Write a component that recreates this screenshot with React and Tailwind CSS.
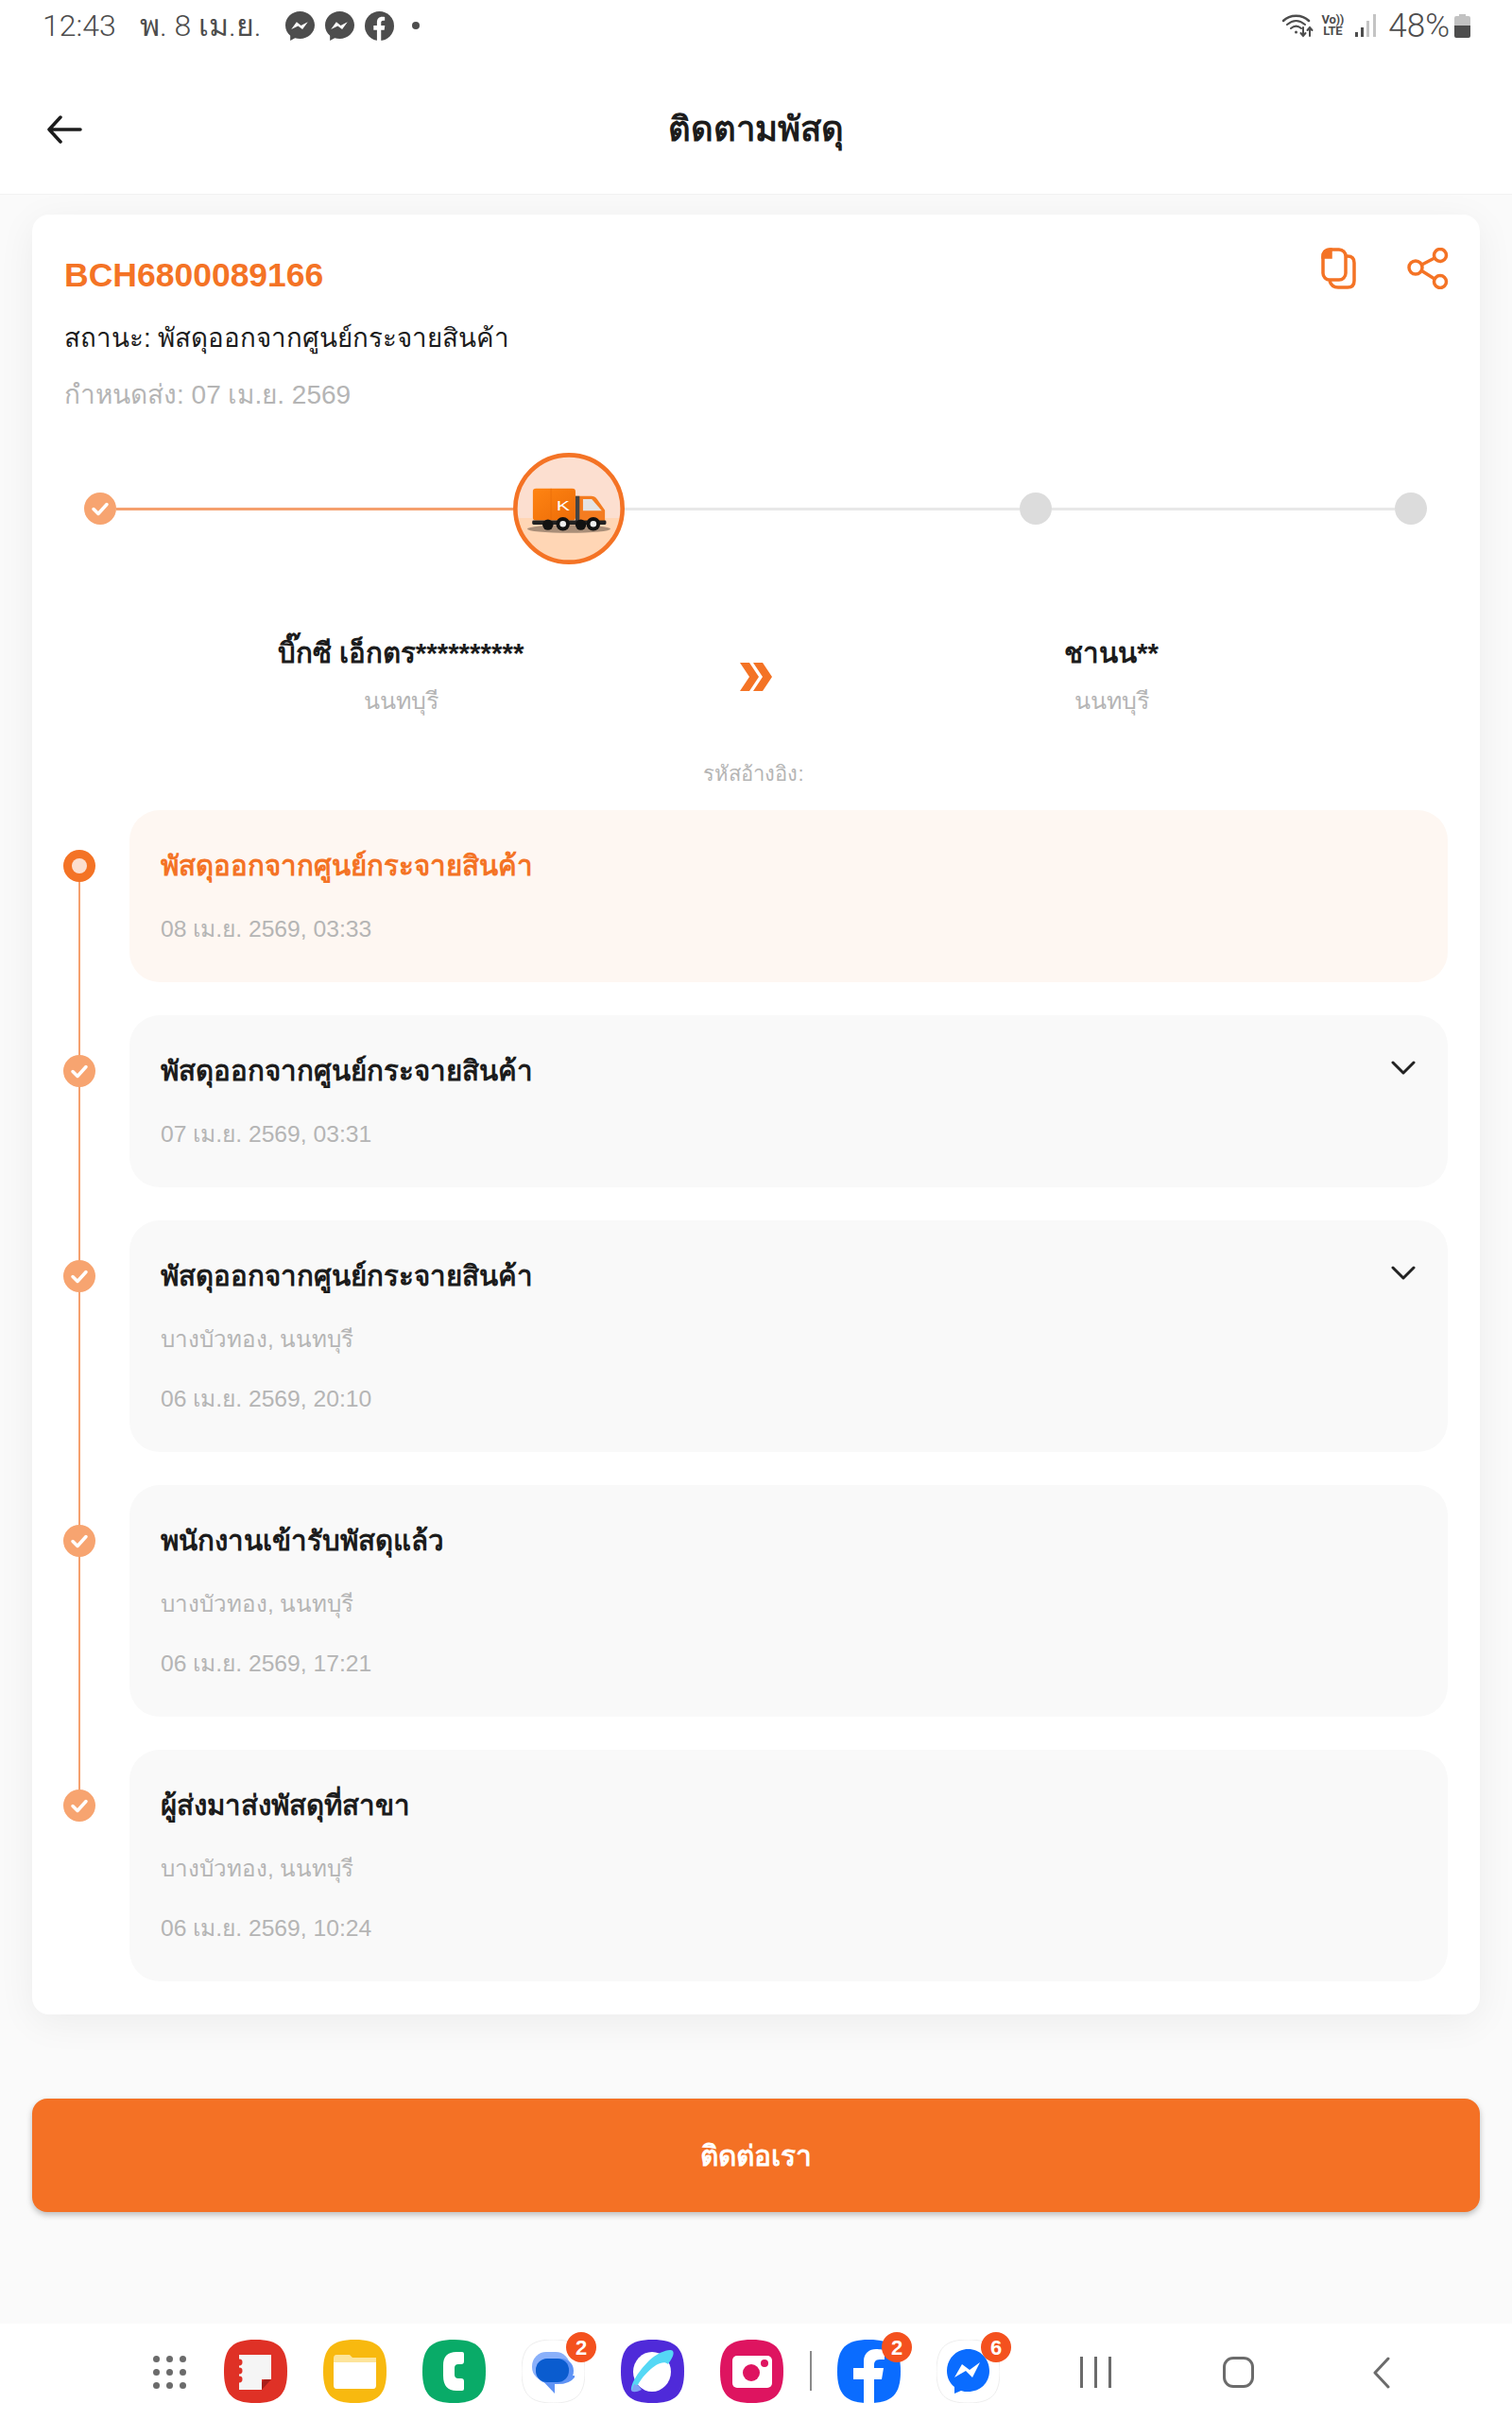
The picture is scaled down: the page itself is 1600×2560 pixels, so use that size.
const FONT = "font-['Liberation_Sans','Noto_Sans',sans-serif]";

const Messenger = ({ size = 31, color = "#4d4d4d" }) => (
  <svg width={size} height={size} viewBox="0 0 30 30">
    <path d="M15 0C6.700 0 0 6.200 0 14.300c0 4.300 1.900 8 5 10.600V30l4.800-2.700c1.600.5 3.400.8 5.200.8 8.300 0 15-6.200 15-14S23.300 0 15 0Z" fill={color} />
    <path d="M6 18.500 11.500 11l4.500 3.500L23 11l-5.500 7.500L13 15Z" fill="#fff" />
  </svg>
);

const StatusBar = () => (
  <div className="flex justify-between items-center h-[54px] pl-[45px] pr-[44px] text-[#4d4d4d] font-['Roboto','Liberation_Sans',sans-serif]">
    <div className="flex items-center">
      <span className="text-[32px] font-light w-[103px]">12:43</span>
      <span className="text-[32px] font-light w-[154px]">พ. 8 เม.ย.</span>
      <div className="flex items-center gap-[11px]">
        <Messenger />
        <Messenger />
        <svg width="31" height="31" viewBox="0 0 30 30">
          <circle cx="15" cy="15" r="15" fill="#4d4d4d" />
          <path d="M12.500 30V19H9v-4.500h3.500V11c0-3.500 2.200-5.500 5.300-5.500 1.500 0 2.700.2 2.700.2v3.800h-1.600c-1.700 0-2.200 1-2.200 2.100v2.900h3.900l-.6 4.500h-3.300v11Z" fill="#fff" />
        </svg>
        <div className="w-[8px] h-[8px] rounded-full bg-[#4d4d4d] ml-[8px]"></div>
      </div>
    </div>
    <div className="flex items-center">
      <svg width="34" height="26" viewBox="0 0 34 26" fill="none" stroke="#4d4d4d" strokeWidth="2" strokeLinecap="round">
        <path d="M1 8C8 1 21 1 28 8" strokeWidth="2.500" />
        <path d="M5 12C11 7 18 7 24 12" />
        <path d="M9 16C12.500 13 16.500 13 20 16" />
        <circle cx="14.500" cy="20" r="1.500" fill="#4d4d4d" stroke="none" />
        <path d="M22 15v8M19.500 21l2.500 3 2.500-3M29 24v-8M26.500 18l2.500-3 2.500 3" />
      </svg>
      <div className="flex flex-col items-center w-[26px] ml-[6px] text-[13px] leading-[12px] font-bold tracking-[-0.3px]">
        <span>Vo))</span>
        <span>LTE</span>
      </div>
      <svg className="ml-[11px]" width="22" height="24" viewBox="0 0 22 24">
        <rect x="0" y="19" width="3" height="5" fill="#4d4d4d" />
        <rect x="6" y="14" width="3" height="10" fill="#4d4d4d" />
        <rect x="12" y="7" width="3" height="17" fill="#c4c4c4" />
        <rect x="19" y="0" width="3" height="24" fill="#c4c4c4" />
      </svg>
      <span className="text-[35px] font-light ml-[13px] leading-none">48%</span>
      <svg className="ml-[5px]" width="17" height="25" viewBox="0 0 17 25">
        <path d="M5 0h7v2h3q2 0 2 2v8H0V4q0-2 2-2h3Z" fill="#c2c2c2" />
        <path d="M0 12h17v11q0 2-2 2H2q-2 0-2-2Z" fill="#4d4d4d" />
      </svg>
    </div>
  </div>
);

const Check = () => (
  <svg width="34" height="34" viewBox="0 0 34 34">
    <circle cx="17" cy="17" r="17" fill="#f7a470" />
    <path d="M10 17.500l5 5 9-10" fill="none" stroke="#fff" strokeWidth="3.500" strokeLinecap="round" strokeLinejoin="round" />
  </svg>
);

const Truck = () => (
  <svg className="shrink-0" width="118" height="118" viewBox="129 57 356 356">
    <defs>
      <clipPath id="disc">
        <circle cx="307" cy="235" r="171" />
      </clipPath>
      <linearGradient id="box" x1="0" y1="0" x2="1" y2="1">
        <stop offset="0" stopColor="#ff8412" />
        <stop offset="1" stopColor="#ec6c08" />
      </linearGradient>
    </defs>
    <g clipPath="url(#disc)">
      <rect x="129" y="57" width="356" height="208" fill="#fcdfd0" />
      <rect x="129" y="265" width="356" height="148" fill="#ffd6b5" />
    </g>
    <circle cx="307" cy="235" r="171" fill="none" stroke="#f47325" strokeWidth="14" />
    <ellipse cx="307" cy="300" rx="133" ry="13" fill="#a98e78" />
    <rect x="192" y="171" width="136" height="102" rx="10" fill="url(#box)" />
    <path d="M250 171v102" stroke="#e56a0a" strokeWidth="2" />
    <text x="267" y="240" fontSize="45" fill="#fff" fontFamily="Liberation Sans" textLength="43" lengthAdjust="spacingAndGlyphs">K</text>
    <path d="M328 195H378Q390 195 397 205L422 240V277H328Z" fill="#f47c20" />
    <rect x="328" y="195" width="13" height="82" fill="#444" />
    <path d="M352 205H380L412 242H352Z" fill="#e4e4e4" />
    <rect x="190" y="273" width="236" height="13" rx="4" fill="#222" />
    <circle cx="240" cy="287" r="17" fill="#111" />
    <circle cx="345" cy="287" r="17" fill="#111" />
    <circle cx="288" cy="284" r="22" fill="#111" />
    <circle cx="288" cy="284" r="10" fill="#eee" />
    <circle cx="385" cy="284" r="22" fill="#111" />
    <circle cx="385" cy="284" r="10" fill="#eee" />
  </svg>
);

const Stepper = () => (
  <div className="flex items-center h-[118px] mt-[36px] ml-[21px] mr-[22px]">
    <Check />
    <div className="w-[420px] h-[3px] bg-[#f5a06e]"></div>
    <Truck />
    <div className="w-[418px] h-[3px] bg-[#e8e8e8]"></div>
    <div className="shrink-0 w-[34px] h-[34px] rounded-full bg-[#dcdcdc]"></div>
    <div className="flex-1 h-[3px] bg-[#e8e8e8]"></div>
    <div className="shrink-0 w-[34px] h-[34px] rounded-full bg-[#dcdcdc]"></div>
  </div>
);

const Party = ({ name, place }) => (
  <div className="flex flex-col items-center w-[700px]">
    <p className="text-[29.500px] leading-[50px] font-bold text-[#1c1c1c]">{name}</p>
    <p className="text-[25px] leading-[50px] text-[#b5b5b5]">{place}</p>
  </div>
);

const steps = [
  { title: "พัสดุออกจากศูนย์กระจายสินค้า", date: "08 เม.ย. 2569, 03:33", active: true },
  { title: "พัสดุออกจากศูนย์กระจายสินค้า", date: "07 เม.ย. 2569, 03:31", more: true },
  { title: "พัสดุออกจากศูนย์กระจายสินค้า", place: "บางบัวทอง, นนทบุรี", date: "06 เม.ย. 2569, 20:10", more: true },
  { title: "พนักงานเข้ารับพัสดุแล้ว", place: "บางบัวทอง, นนทบุรี", date: "06 เม.ย. 2569, 17:21" },
  { title: "ผู้ส่งมาส่งพัสดุที่สาขา", place: "บางบัวทอง, นนทบุรี", date: "06 เม.ย. 2569, 10:24" },
];

const StepRow = ({ step, last }) => (
  <div className="relative flex">
    <div className="relative w-[69px] shrink-0">
      {!last && <div className="absolute left-[15px] top-[60px] h-[calc(100%+35px)] w-[2px] bg-[#f5a06e]"></div>}
      <div className="absolute left-[-1px] top-[42px]">
        {step.active ? (
          <div className="flex items-center justify-center w-[34px] h-[34px] rounded-full bg-[#f47325]">
            <div className="w-[16px] h-[16px] rounded-full bg-[#fcdfd0]"></div>
          </div>
        ) : (
          <Check />
        )}
      </div>
    </div>
    <div className={`relative flex-1 rounded-[32px] pl-[33px] pt-[34px] pb-[36px] ${step.active ? "bg-[#fef7f2]" : "bg-[#f9f9f9]"}`}>
      <p className={`text-[29.500px] leading-[50px] font-bold ${step.active ? "text-[#f47325]" : "text-[#1c1c1c]"}`}>{step.title}</p>
      {step.place && <p className="text-[24.200px] leading-[40px] mt-[22px] text-[#b5b5b5]">{step.place}</p>}
      <p className={`text-[24.700px] leading-[40px] text-[#b5b5b5] ${step.place ? "mt-[23px]" : "mt-[22px]"}`}>{step.date}</p>
      {step.more && (
        <svg className="absolute right-[34px] top-[48px]" width="26" height="16" viewBox="0 0 26 16" fill="none" stroke="#222" strokeWidth="3" strokeLinecap="round" strokeLinejoin="round">
          <path d="M2 2l11 11L24 2" />
        </svg>
      )}
    </div>
  </div>
);

const Squircle = ({ fill }) => (
  <path d="M33.500 0C58 0 67 9 67 33.500S58 67 33.500 67 0 58 0 33.500 9 0 33.500 0Z" fill={fill} />
);

const Badge = ({ n }) => (
  <div className="absolute right-[-12px] top-[-8px] flex items-center justify-center w-[32px] h-[32px] rounded-full bg-[#f4511e] text-white text-[22px] font-bold">
    {n}
  </div>
);

const DockIcon = ({ badge, children }) => (
  <div className="relative w-[67px] h-[67px]">
    <svg width="67" height="67" viewBox="0 0 67 67">
      {children}
    </svg>
    {badge && <Badge n={badge} />}
  </div>
);

const Dock = () => (
  <div className="flex items-start h-[102px] bg-white pt-[17px] pl-[162px]">
    <div className="grid grid-cols-[7px_7px_7px] gap-[7px] mt-[17px] w-[35px] mr-[40px]">
      {[0, 1, 2, 3, 4, 5, 6, 7, 8].map((i) => (
        <div key={i} className="w-[7px] h-[7px] rounded-full bg-[#6b6b6b]"></div>
      ))}
    </div>
    <div className="flex gap-[38px]">
      <DockIcon>
        <Squircle fill="#df3126" />
        <path d="M16 16H50V42H40V53H16Z" fill="#f5f5f5" />
        <path d="M40 53V47Q40 42 45 42H50Z" fill="#a81f1a" />
        <circle cx="16" cy="24" r="3.500" fill="#df3126" />
        <circle cx="16" cy="33" r="3.500" fill="#df3126" />
        <circle cx="16" cy="42" r="3.500" fill="#df3126" />
      </DockIcon>
      <DockIcon>
        <Squircle fill="#f8b90f" />
        <path d="M11 20Q11 16 14 16H28L31 19H56V26H11Z" fill="#fde49a" />
        <path d="M11 24H56V48Q56 52 53 52H14Q11 52 11 48Z" fill="#fff" />
      </DockIcon>
      <DockIcon>
        <Squircle fill="#09ab68" />
        <path d="M42 13H36Q22 13 22 27V38Q22 54 36 54H42Q44 54 44 52V44Q44 41 41 41H38Q34 41 34 37V30Q34 26 38 26H41Q44 26 44 23V15Q44 13 42 13Z" fill="#fff" />
      </DockIcon>
      <DockIcon badge="2">
        <Squircle fill="#fff" />
        <path d="M33.500 0C58 0 67 9 67 33.500S58 67 33.500 67 0 58 0 33.500 9 0 33.500 0Z" fill="none" stroke="#eee" />
        <rect x="11" y="13" width="40" height="31" rx="15" fill="#8ab0fa" />
        <path d="M17 38H56V40Q50 48 35 47V57Z" fill="#5f93f5" />
        <rect x="15" y="20" width="40" height="26" rx="13" fill="#5f93f5" />
        <rect x="15" y="20" width="35" height="25" rx="12" fill="#0a5ccf" />
      </DockIcon>
      <DockIcon>
        <Squircle fill="#4f2ad9" />
        <ellipse cx="33" cy="34" rx="20" ry="21" fill="#fff" />
        <path d="M11 54C10 46 20 32 30 22 40 13 52 9 55 12 57 15 54 20 50 26 42 18 22 38 17 50Z" fill="#55d8f5" />
        <path d="M11 54Q14 57 22 53L19 49 14 47Z" fill="#7fa3f5" />
      </DockIcon>
      <DockIcon>
        <Squircle fill="#de1460" />
        <rect x="13" y="17" width="42" height="34" rx="5" fill="#fff" />
        <circle cx="33" cy="35" r="9" fill="#de1460" />
        <circle cx="47" cy="25" r="4" fill="#de1460" />
      </DockIcon>
    </div>
    <div className="w-[2px] h-[42px] bg-[#8a8a8a] mt-[12px] ml-[28px] mr-[27px]"></div>
    <div className="flex gap-[38px]">
      <DockIcon badge="2">
        <Squircle fill="#0a6cff" />
        <path d="M28 67V42H17V30H28V23C28 14 34 10 41 10 45 10 50 11 50 11V21H45C40 21 39 24 39 27V30H49L47 42H39V67Z" fill="#fff" />
      </DockIcon>
      <DockIcon badge="6">
        <Squircle fill="#fff" />
        <path d="M33.500 0C58 0 67 9 67 33.500S58 67 33.500 67 0 58 0 33.500 9 0 33.500 0Z" fill="none" stroke="#eee" />
        <path d="M33.500 10C21 10 11 20 11 33C11 40 14 46 19 50V57L26 54C28.500 55 31 55 33.500 55C46 55 56 46 56 33S46 10 33.500 10Z" fill="#0a6cff" />
        <path d="M19 40L27 26 35 32 46 24 38 40 31 33Z" fill="#fff" />
      </DockIcon>
    </div>
    <div className="flex gap-[12px] mt-[18px] ml-[85px]">
      <div className="w-[3px] h-[33px] bg-[#6b6b6b]"></div>
      <div className="w-[3px] h-[33px] bg-[#6b6b6b]"></div>
      <div className="w-[3px] h-[33px] bg-[#6b6b6b]"></div>
    </div>
    <div className="w-[33px] h-[33px] mt-[18px] ml-[118px] rounded-[11px] border-[3px] border-[#6b6b6b]"></div>
    <svg className="mt-[18px] ml-[126px]" width="18" height="34" viewBox="0 0 18 34" fill="none" stroke="#6b6b6b" strokeWidth="3" strokeLinecap="round" strokeLinejoin="round">
      <path d="M16 2L2 17l14 15" />
    </svg>
  </div>
);

const App = () => {
  return (
    <div className={`flex flex-col w-[1600px] h-[2560px] bg-[#fafafa] ${FONT}`}>
      <header className="h-[206px] bg-white border-b border-[#f2f2f2]">
        <StatusBar />
        <div className="relative flex items-center justify-center h-[166px]">
          <svg className="absolute left-[49px]" width="38" height="30" viewBox="0 0 38 30" fill="none" stroke="#1c1c1c" strokeWidth="3.500" strokeLinecap="round" strokeLinejoin="round">
            <path d="M36 15H3M15 2L3 15l12 13" />
          </svg>
          <p className="text-[36.500px] font-bold text-[#1c1c1c]">ติดตามพัสดุ</p>
        </div>
      </header>
      <main className="flex flex-col px-[34px] pt-[21px]">
        <section className="flex flex-col bg-white rounded-[18px] px-[34px] pb-[35px] shadow-[0_8px_40px_rgba(0,0,0,0.06)]">
          <div className="relative pt-[39px]">
            <p className="text-[35.500px] leading-[50px] font-bold text-[#f47325]">BCH6800089166</p>
            <p className="text-[27.700px] leading-[50px] mt-[17px] text-[#1c1c1c]">สถานะ: พัสดุออกจากศูนย์กระจายสินค้า</p>
            <p className="text-[28px] leading-[50px] mt-[10px] text-[#b5b5b5]">กำหนดส่ง: 07 เม.ย. 2569</p>
            <div className="absolute right-[-1px] top-[35px] flex gap-[54px]">
              <svg width="37" height="44" viewBox="0 0 37 44" fill="none" stroke="#f47325" strokeWidth="3.500">
                <rect x="2" y="2" width="24" height="32" rx="7" />
                <path d="M27 9h1q7 0 7 7v19q0 7-7 7h-10q-7 0-9-7" />
                <path d="M2 10Q2 2 10 2v8Z" fill="#f47325" />
              </svg>
              <svg width="44" height="44" viewBox="0 0 44 44" fill="none" stroke="#f47325" strokeWidth="3.500">
                <circle cx="35" cy="8" r="6.500" />
                <circle cx="35" cy="36" r="6.500" />
                <circle cx="9" cy="21" r="7" />
                <path d="M15.500 18L29 11M15.500 24.500L29 33" />
              </svg>
            </div>
          </div>
          <Stepper />
          <div className="flex items-center mt-[69px] mx-[6px]">
            <Party name="บิ๊กซี เอ็กตร**********" place="นนทบุรี" />
            <div className="flex justify-center w-[52px]">
              <svg width="34" height="30" viewBox="0 0 34 30" fill="#f47325">
                <path d="M0 0H10L20 15 10 30H0L10 15ZM14 0H24L34 15 24 30H14L24 15Z" />
              </svg>
            </div>
            <Party name="ชานน**" place="นนทบุรี" />
          </div>
          <p className="text-[22px] leading-[40px] mt-[33px] text-center text-[#b5b5b5] pr-[5px]">รหัสอ้างอิง:</p>
          <div className="flex flex-col gap-[35px] mt-[18px]">
            {steps.map((step, i) => (
              <StepRow key={i} step={step} last={i === steps.length - 1} />
            ))}
          </div>
        </section>
        <button className="h-[120px] mt-[89px] rounded-[16px] bg-[#f47125] text-white text-[30px] font-bold shadow-[0_3px_6px_rgba(0,0,0,0.25)]">
          ติดต่อเรา
        </button>
      </main>
      <div className="mt-auto">
        <Dock />
      </div>
    </div>
  );
};

export default App;
